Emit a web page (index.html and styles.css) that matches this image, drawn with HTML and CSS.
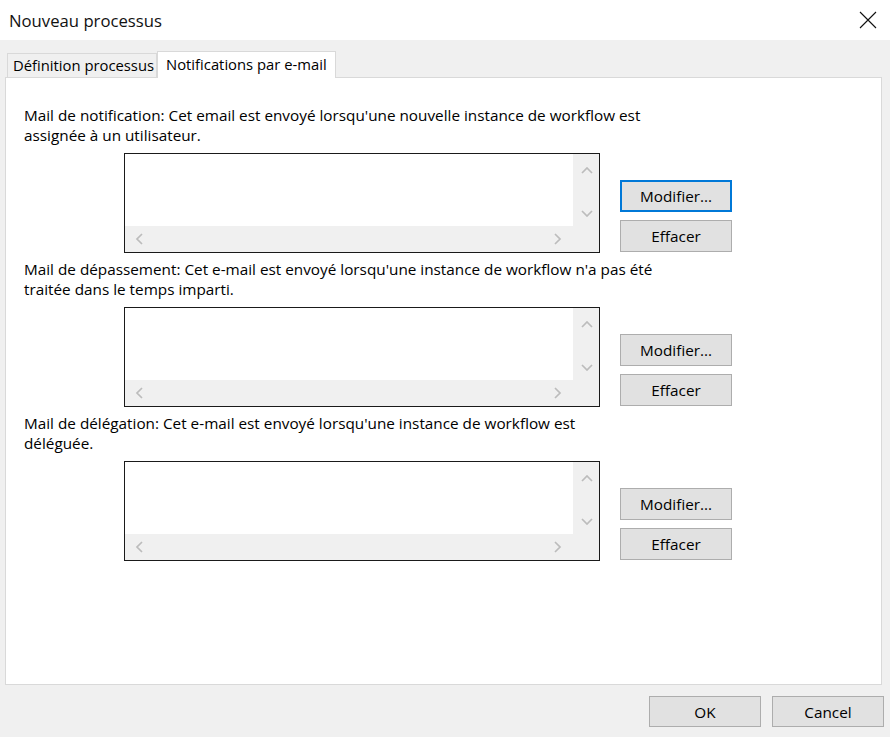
FILE: index.html
```html
<!DOCTYPE html>
<html lang="fr">
<head>
<meta charset="utf-8">
<title>Nouveau processus</title>
<link rel="stylesheet" href="styles.css">
</head>
<body>
<div class="dialog">
  <header class="titlebar">
    <span class="title">Nouveau processus</span>
    <svg class="close" width="18" height="18" viewBox="0 0 18 18"><path d="M1 1 L17 17 M17 1 L1 17" stroke="#111" stroke-width="1.1" fill="none"/></svg>
  </header>
  <div class="body">
    <div class="tabs">
      <div class="tab">Définition processus</div>
      <div class="tab active">Notifications par e-mail</div>
    </div>
    <div class="panel">
      <section class="mail">
        <p class="label">Mail de notification: Cet email est envoyé lorsqu'une nouvelle instance de workflow est<br>assignée à un utilisateur.</p>
        <div class="row">
          <div class="box">
            <div class="area"></div>
            <div class="vbar">
              <svg class="chev" width="12" height="7" viewBox="0 0 12 7"><polyline points="1,6 6,1 11,6" fill="none" stroke="#bcbcbc" stroke-width="1.7"/></svg>
              <svg class="chev" width="12" height="7" viewBox="0 0 12 7"><polyline points="1,1 6,6 11,1" fill="none" stroke="#bcbcbc" stroke-width="1.7"/></svg>
            </div>
            <div class="hbar">
              <svg class="chev" width="8" height="12" viewBox="0 0 8 12"><polyline points="7,1 2,6 7,11" fill="none" stroke="#bcbcbc" stroke-width="1.7"/></svg>
              <svg class="chev" width="8" height="12" viewBox="0 0 8 12"><polyline points="1,1 6,6 1,11" fill="none" stroke="#bcbcbc" stroke-width="1.7"/></svg>
            </div>
            <div class="corner"></div>
          </div>
          <div class="btns">
            <button class="btn focus">Modifier...</button>
            <button class="btn">Effacer</button>
          </div>
        </div>
      </section>
      <section class="mail">
        <p class="label">Mail de dépassement: Cet e-mail est envoyé lorsqu'une instance de workflow n'a pas été<br>traitée dans le temps imparti.</p>
        <div class="row">
          <div class="box">
            <div class="area"></div>
            <div class="vbar">
              <svg class="chev" width="12" height="7" viewBox="0 0 12 7"><polyline points="1,6 6,1 11,6" fill="none" stroke="#bcbcbc" stroke-width="1.7"/></svg>
              <svg class="chev" width="12" height="7" viewBox="0 0 12 7"><polyline points="1,1 6,6 11,1" fill="none" stroke="#bcbcbc" stroke-width="1.7"/></svg>
            </div>
            <div class="hbar">
              <svg class="chev" width="8" height="12" viewBox="0 0 8 12"><polyline points="7,1 2,6 7,11" fill="none" stroke="#bcbcbc" stroke-width="1.7"/></svg>
              <svg class="chev" width="8" height="12" viewBox="0 0 8 12"><polyline points="1,1 6,6 1,11" fill="none" stroke="#bcbcbc" stroke-width="1.7"/></svg>
            </div>
            <div class="corner"></div>
          </div>
          <div class="btns">
            <button class="btn">Modifier...</button>
            <button class="btn">Effacer</button>
          </div>
        </div>
      </section>
      <section class="mail">
        <p class="label">Mail de délégation: Cet e-mail est envoyé lorsqu'une instance de workflow est<br>déléguée.</p>
        <div class="row">
          <div class="box">
            <div class="area"></div>
            <div class="vbar">
              <svg class="chev" width="12" height="7" viewBox="0 0 12 7"><polyline points="1,6 6,1 11,6" fill="none" stroke="#bcbcbc" stroke-width="1.7"/></svg>
              <svg class="chev" width="12" height="7" viewBox="0 0 12 7"><polyline points="1,1 6,6 11,1" fill="none" stroke="#bcbcbc" stroke-width="1.7"/></svg>
            </div>
            <div class="hbar">
              <svg class="chev" width="8" height="12" viewBox="0 0 8 12"><polyline points="7,1 2,6 7,11" fill="none" stroke="#bcbcbc" stroke-width="1.7"/></svg>
              <svg class="chev" width="8" height="12" viewBox="0 0 8 12"><polyline points="1,1 6,6 1,11" fill="none" stroke="#bcbcbc" stroke-width="1.7"/></svg>
            </div>
            <div class="corner"></div>
          </div>
          <div class="btns">
            <button class="btn">Modifier...</button>
            <button class="btn">Effacer</button>
          </div>
        </div>
      </section>
    </div>
    <div class="footer">
      <button class="btn wide">OK</button>
      <button class="btn wide">Cancel</button>
    </div>
  </div>
</div>
</body>
</html>
```
FILE: styles.css
```css
* { box-sizing: border-box; }
html, body { margin: 0; padding: 0; }
body {
  width: 890px;
  height: 737px;
  background: #f0f0f0;
  font-family: "Open Sans", "Liberation Sans", Arial, sans-serif;
  font-size: 15.3px;
  color: #000;
  overflow: hidden;
}
.titlebar {
  height: 40px;
  background: #fff;
  display: flex;
  align-items: center;
  justify-content: space-between;
  padding: 0 13px 0 9px;
}
.title { font-size: 16.7px; color: #111; }
.close { display: block; }
.body { padding: 11px 8px 0 5px; }
.tabs {
  display: flex;
  align-items: flex-end;
  padding-left: 2px;
  height: 26px;
  position: relative;
  z-index: 1;
  font-size: 14.8px;
}
.tab {
  height: 24px;
  padding: 0 2px 0 5px;
  border: 1px solid #d9d9d9;
  border-bottom: none;
  background: #f0f0f0;
  line-height: 22px;
  white-space: nowrap;
}
.tab.active {
  height: 27px;
  margin-bottom: -1px;
  background: #fff;
  padding: 0 8px 0 8px;
  border-left: 1px solid #d9d9d9;
  line-height: 24px;
}
.panel {
  height: 608px;
  background: #fff;
  border: 1px solid #d9d9d9;
  padding: 27px 0 0 18px;
}
.mail { margin-bottom: 6px; }
.label {
  margin: 0 0 8px 0;
  line-height: 20px;
  white-space: nowrap;
}
.row { display: flex; padding-left: 100px; }
.box {
  width: 476px;
  height: 100px;
  border: 1px solid #1a1a1a;
  display: grid;
  grid-template-columns: 1fr 26px;
  grid-template-rows: 1fr 26px;
}
.area { background: #fff; }
.vbar, .hbar, .corner { background: #f0f0f0; }
.chev { display: block; }
.vbar {
  display: flex;
  flex-direction: column;
  align-items: center;
  justify-content: space-between;
  padding: 13px 0 9px 1px;
}
.hbar {
  display: flex;
  align-items: center;
  justify-content: space-between;
  padding: 0 11px 0 10px;
}
.btns {
  display: flex;
  flex-direction: column;
  gap: 8px;
  padding: 27px 0 0 20px;
}
.btn {
  width: 112px;
  height: 32px;
  background: #e1e1e1;
  border: 1px solid #adadad;
  font-family: inherit;
  font-size: 15.3px;
  color: #000;
  padding: 0;
  margin: 0;
}
.btn.focus { border: 2px solid #0078d7; }
.footer {
  display: flex;
  justify-content: flex-end;
  gap: 11px;
  padding: 11px 0 0 0;
  margin-right: -2px;
}
.btn.wide { height: 31px; }
```
